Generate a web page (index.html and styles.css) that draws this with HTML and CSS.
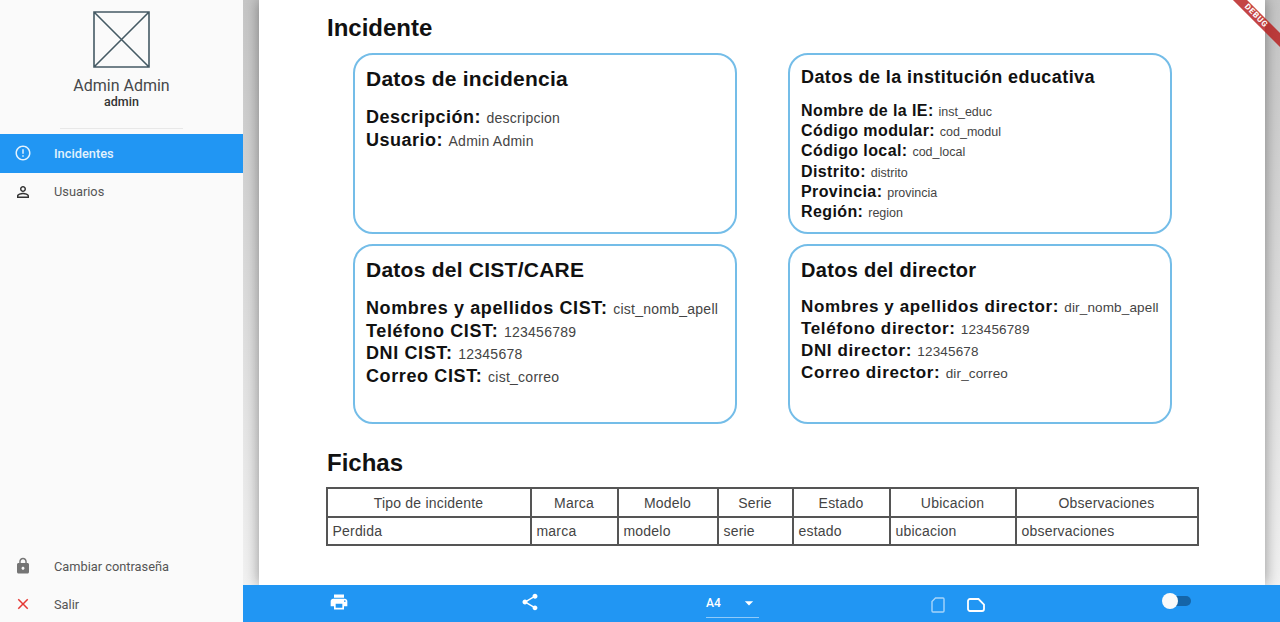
FILE: index.html
```html
<!DOCTYPE html>
<html lang="en">
<head>
    <meta charset="UTF-8">
    <meta name="viewport" content="width=device-width, initial-scale=1.0">
    <title>Incidente</title>
    <link rel="stylesheet" href="styles.css">
</head>
<body>

<div class="app">
    <aside class="sidebar">
        <div class="profile">
            <svg class="avatar" viewBox="0 0 57 57" width="57" height="57">
                <path d="M1 1h55v55H1zM1 1l55 55M56 1L1 56" fill="none" stroke="#455a64" stroke-width="1.6"/>
            </svg>
            <div class="profile-name">Admin Admin</div>
            <div class="profile-user">admin</div>
        </div>
        <div class="divider"></div>
        <nav class="menu">
            <a class="menu-item active">
                <svg class="menu-icon" viewBox="0 0 24 24"><path d="M11 15h2v2h-2zm0-8h2v6h-2zm.99-5C6.47 2 2 6.48 2 12s4.47 10 9.99 10C17.52 22 22 17.52 22 12S17.52 2 11.99 2zM12 20c-4.42 0-8-3.58-8-8s3.58-8 8-8 8 3.58 8 8-3.58 8-8 8z"/></svg>
                Incidentes
            </a>
            <a class="menu-item">
                <svg class="menu-icon" viewBox="0 0 24 24"><path d="M12 5.9c1.16 0 2.1.94 2.1 2.1s-.94 2.1-2.1 2.1S9.9 9.16 9.9 8s.94-2.1 2.1-2.1m0 9c2.97 0 6.1 1.46 6.1 2.1v1.1H5.9V17c0-.64 3.13-2.1 6.1-2.1M12 4C9.79 4 8 5.79 8 8s1.79 4 4 4 4-1.79 4-4-1.79-4-4-4zm0 9c-2.67 0-8 1.34-8 4v3h16v-3c0-2.66-5.33-4-8-4z"/></svg>
                Usuarios
            </a>
        </nav>
        <nav class="menu menu-bottom">
            <a class="menu-item">
                <svg class="menu-icon icon-grey" viewBox="0 0 24 24"><path d="M18 8h-1V6c0-2.76-2.24-5-5-5S7 3.24 7 6v2H6c-1.1 0-2 .9-2 2v10c0 1.1.9 2 2 2h12c1.1 0 2-.9 2-2V10c0-1.1-.9-2-2-2zm-6 9c-1.1 0-2-.9-2-2s.9-2 2-2 2 .9 2 2-.9 2-2 2zm3.1-9H8.9V6c0-1.71 1.39-3.1 3.1-3.1 1.71 0 3.1 1.39 3.1 3.1v2z"/></svg>
                Cambiar contraseña
            </a>
            <a class="menu-item">
                <svg class="menu-icon icon-red" viewBox="0 0 24 24"><path d="M19 6.41L17.59 5 12 10.59 6.41 5 5 6.41 10.59 12 5 17.59 6.41 19 12 13.41 17.59 19 19 17.59 13.41 12z"/></svg>
                Salir
            </a>
        </nav>
    </aside>

    <main class="viewer">
        <div class="preview">
            <div class="sheet">
                <h1>Incidente</h1>
                <div class="cards">
                    <section class="card">
                        <h2>Datos de incidencia</h2>
                        <p><b>Descripción:</b> <span>descripcion</span></p>
                        <p><b>Usuario:</b> <span>Admin Admin</span></p>
                    </section>
                    <section class="card card-small">
                        <h2>Datos de la institución educativa</h2>
                        <p><b>Nombre de la IE:</b> <span>inst_educ</span></p>
                        <p><b>Código modular:</b> <span>cod_modul</span></p>
                        <p><b>Código local:</b> <span>cod_local</span></p>
                        <p><b>Distrito:</b> <span>distrito</span></p>
                        <p><b>Provincia:</b> <span>provincia</span></p>
                        <p><b>Región:</b> <span>region</span></p>
                    </section>
                    <section class="card card-cist">
                        <h2>Datos del CIST/CARE</h2>
                        <p><b>Nombres y apellidos CIST:</b> <span>cist_nomb_apell</span></p>
                        <p><b>Teléfono CIST:</b> <span>123456789</span></p>
                        <p><b>DNI CIST:</b> <span>12345678</span></p>
                        <p><b>Correo CIST:</b> <span>cist_correo</span></p>
                    </section>
                    <section class="card card-director">
                        <h2>Datos del director</h2>
                        <p><b>Nombres y apellidos director:</b> <span>dir_nomb_apell</span></p>
                        <p><b>Teléfono director:</b> <span>123456789</span></p>
                        <p><b>DNI director:</b> <span>12345678</span></p>
                        <p><b>Correo director:</b> <span>dir_correo</span></p>
                    </section>
                </div>
                <h1 class="fichas-title">Fichas</h1>
                <table class="fichas">
                    <colgroup>
                        <col class="col-tipo"><col class="col-marca"><col class="col-modelo"><col class="col-serie"><col class="col-estado"><col class="col-ubic"><col class="col-obs">
                    </colgroup>
                    <tr>
                        <th>Tipo de incidente</th><th>Marca</th><th>Modelo</th><th>Serie</th><th>Estado</th><th>Ubicacion</th><th>Observaciones</th>
                    </tr>
                    <tr>
                        <td>Perdida</td><td>marca</td><td>modelo</td><td>serie</td><td>estado</td><td>ubicacion</td><td>observaciones</td>
                    </tr>
                </table>
            </div>
        </div>
        <div class="toolbar">
            <div class="tool-slot">
                <svg class="tool-icon" viewBox="0 0 24 24"><path d="M19 8H5c-1.66 0-3 1.34-3 3v6h4v4h12v-4h4v-6c0-1.66-1.34-3-3-3zm-3 11H8v-5h8v5zm3-7c-.55 0-1-.45-1-1s.45-1 1-1 1 .45 1 1-.45 1-1 1zm-1-9H6v4h12V3z"/></svg>
            </div>
            <div class="tool-slot">
                <svg class="tool-icon" viewBox="0 0 24 24"><path d="M18 16.08c-.76 0-1.44.3-1.96.77L8.91 12.7c.05-.23.09-.46.09-.7s-.04-.47-.09-.7l7.05-4.11c.54.5 1.25.81 2.04.81 1.66 0 3-1.34 3-3s-1.34-3-3-3-3 1.34-3 3c0 .24.04.47.09.7L8.04 9.81C7.5 9.31 6.79 9 6 9c-1.66 0-3 1.34-3 3s1.34 3 3 3c.79 0 1.5-.31 2.04-.81l7.12 4.16c-.05.21-.08.43-.08.65 0 1.61 1.31 2.92 2.92 2.92 1.61 0 2.92-1.31 2.92-2.92s-1.31-2.92-2.92-2.92z"/></svg>
            </div>
            <div class="page-select">
                <span>A4</span>
                <svg class="drop-icon" viewBox="0 0 24 24"><path d="M7 10l5 5 5-5z"/></svg>
            </div>
            <div class="orientation">
                <svg class="orient-portrait" viewBox="0 0 14 16"><path d="M4.5 1H12a1 1 0 0 1 1 1v12a1 1 0 0 1-1 1H2a1 1 0 0 1-1-1V4.5z" fill="none" stroke="#fff" stroke-width="1.4"/></svg>
                <svg class="orient-landscape" viewBox="0 0 18 14"><path d="M3 1h8.5L17 6.5V11a2 2 0 0 1-2 2H3a2 2 0 0 1-2-2V3a2 2 0 0 1 2-2z" fill="none" stroke="#fff" stroke-width="1.8"/></svg>
            </div>
            <div class="switch"><i class="switch-thumb"></i></div>
        </div>
        <div class="debug-banner">DEBUG</div>
    </main>
</div>

</body>
</html>
```

FILE: styles.css
```css
* {
    box-sizing: border-box;
}
html, body {
    height: 100%;
}
body {
    margin: 0;
    overflow: hidden;
    font-family: Roboto, sans-serif;
    background-color: #fafafa;
}
.app {
    display: flex;
    height: 622px;
    overflow: hidden;
}

/* sidebar */
.sidebar {
    width: 243px;
    flex: none;
    display: flex;
    flex-direction: column;
    background-color: #fafafa;
}
.profile {
    display: flex;
    flex-direction: column;
    align-items: center;
    padding-top: 11px;
}
.avatar {
    display: block;
}
.profile-name {
    margin-top: 8px;
    font-size: 16px;
    line-height: 19px;
    color: #46484a;
}
.profile-user {
    font-size: 12.5px;
    line-height: 14px;
    font-weight: 500;
    color: #333;
}
.divider {
    height: 1px;
    margin: 19px 60px 5px;
    background-color: #e8e8e8;
}
.menu-bottom {
    margin-top: auto;
    margin-bottom: -1px;
}
.menu-item {
    display: flex;
    align-items: center;
    height: 38.5px;
    padding-left: 14px;
    font-size: 12.8px;
    color: #555;
}
.menu-bottom .menu-item {
    height: 38px;
}
.menu-item.active {
    background-color: #2196f3;
    color: #e3f2fd;
    font-weight: 500;
}
.menu-icon {
    width: 18px;
    height: 18px;
    margin-right: 22px;
    fill: #333;
}
.active .menu-icon {
    fill: #e3f2fd;
}
.icon-grey {
    fill: #757575;
}
.icon-red {
    fill: #e53935;
}

/* pdf preview */
.viewer {
    flex: 1;
    position: relative;
    display: flex;
    flex-direction: column;
    min-width: 0;
    overflow: hidden;
}
.preview {
    flex: 1;
    min-height: 0;
    padding: 0 15px 0 16px;
    background: linear-gradient(to bottom, #c6c6c6, #f2f2f2);
}
.sheet {
    height: 100%;
    padding: 14px 67px 0 68px;
    background-color: #fff;
    box-shadow: 0 0 14px rgba(0, 0, 0, 0.4);
    color: #111;
    font-family: "Liberation Sans", Arial, sans-serif;
}
h1 {
    margin: 0;
    font-size: 24px;
    line-height: 28px;
    font-weight: bold;
}
.fichas-title {
    margin-top: 25px;
}
.cards {
    display: grid;
    grid-template-columns: 384px 384px;
    grid-template-rows: 181px 180px;
    column-gap: 51px;
    row-gap: 10px;
    margin: 11px 0 0 26px;
}
.card {
    padding: 10.5px 11px;
    border: 2px solid #74bde8;
    border-radius: 20px;
}
h2 {
    margin: 0 0 14.5px;
    font-size: 21px;
    line-height: 26px;
    font-weight: bold;
    letter-spacing: 0.25px;
}
.card p {
    margin: 0;
    font-size: 18px;
    line-height: 22.5px;
    letter-spacing: 0.5px;
}
.card p span {
    font-size: 14px;
    line-height: 1;
    letter-spacing: 0.25px;
    color: #444;
}
.card-cist p {
    letter-spacing: 0.62px;
}
.card-small {
    padding-top: 10px;
}
.card-small h2 {
    font-size: 18px;
    line-height: 24px;
    margin-bottom: 12px;
    letter-spacing: 0.42px;
}
.card-small p {
    font-size: 16px;
    line-height: 20.2px;
    letter-spacing: 0.4px;
}
.card-small p span {
    font-size: 12.5px;
    letter-spacing: 0;
}
.card-director h2 {
    font-size: 20px;
    margin-bottom: 13px;
    letter-spacing: 0.3px;
}
.card-director p {
    font-size: 17px;
    line-height: 22px;
    letter-spacing: 0.62px;
}
.card-director p span {
    font-size: 13.5px;
    letter-spacing: 0.15px;
}
.fichas {
    width: 871px;
    margin-top: 10px;
    margin-left: -1.5px;
    border-collapse: collapse;
    table-layout: fixed;
    font-size: 14px;
    letter-spacing: 0.2px;
    color: #444;
}
.fichas th, .fichas td {
    height: 28.5px;
    padding: 1px 5px 0;
    border: 2px solid #555;
    font-weight: normal;
}
.fichas th {
    text-align: center;
}
.fichas td {
    text-align: left;
}
.col-tipo { width: 204px; }
.col-marca { width: 87px; }
.col-modelo { width: 100px; }
.col-serie { width: 75px; }
.col-estado { width: 97px; }
.col-ubic { width: 126px; }
.col-obs { width: 182px; }

/* bottom toolbar */
.toolbar {
    position: relative;
    flex: none;
    height: 37px;
    display: flex;
    align-items: center;
    background-color: #2196f3;
    color: #fff;
}
.tool-slot {
    width: 191px;
    display: flex;
    padding-left: 86px;
}
.tool-icon {
    width: 20px;
    height: 20px;
    fill: #fff;
    margin-top: -4px;
}
.page-select {
    width: 53px;
    height: 29px;
    margin-left: 81px;
    display: flex;
    align-items: center;
    justify-content: space-between;
    border-bottom: 1px solid #90caf9;
    font-size: 12px;
    font-weight: 500;
}
.drop-icon {
    width: 20px;
    height: 20px;
    fill: #fff;
}
.orientation {
    display: flex;
    align-items: center;
    gap: 22px;
    margin-left: 172px;
    margin-top: 2px;
}
.orient-portrait {
    width: 14px;
    height: 16px;
    opacity: 0.6;
}
.orient-landscape {
    width: 18px;
    height: 14px;
}
.switch {
    position: relative;
    width: 26px;
    height: 10px;
    margin-left: 180px;
    margin-top: -5px;
    border-radius: 5px;
    background-color: #1565a8;
}
.switch-thumb {
    position: absolute;
    left: -3px;
    top: -3px;
    width: 16px;
    height: 16px;
    border-radius: 50%;
    background-color: #fafafa;
}

/* flutter debug ribbon */
.debug-banner {
    position: absolute;
    top: 11px;
    right: -16px;
    width: 80px;
    height: 10px;
    transform: rotate(45deg);
    background-color: rgba(183, 28, 28, 0.82);
    color: #fff;
    font-size: 8px;
    line-height: 10px;
    font-weight: bold;
    letter-spacing: 0.8px;
    text-align: center;
}
```
